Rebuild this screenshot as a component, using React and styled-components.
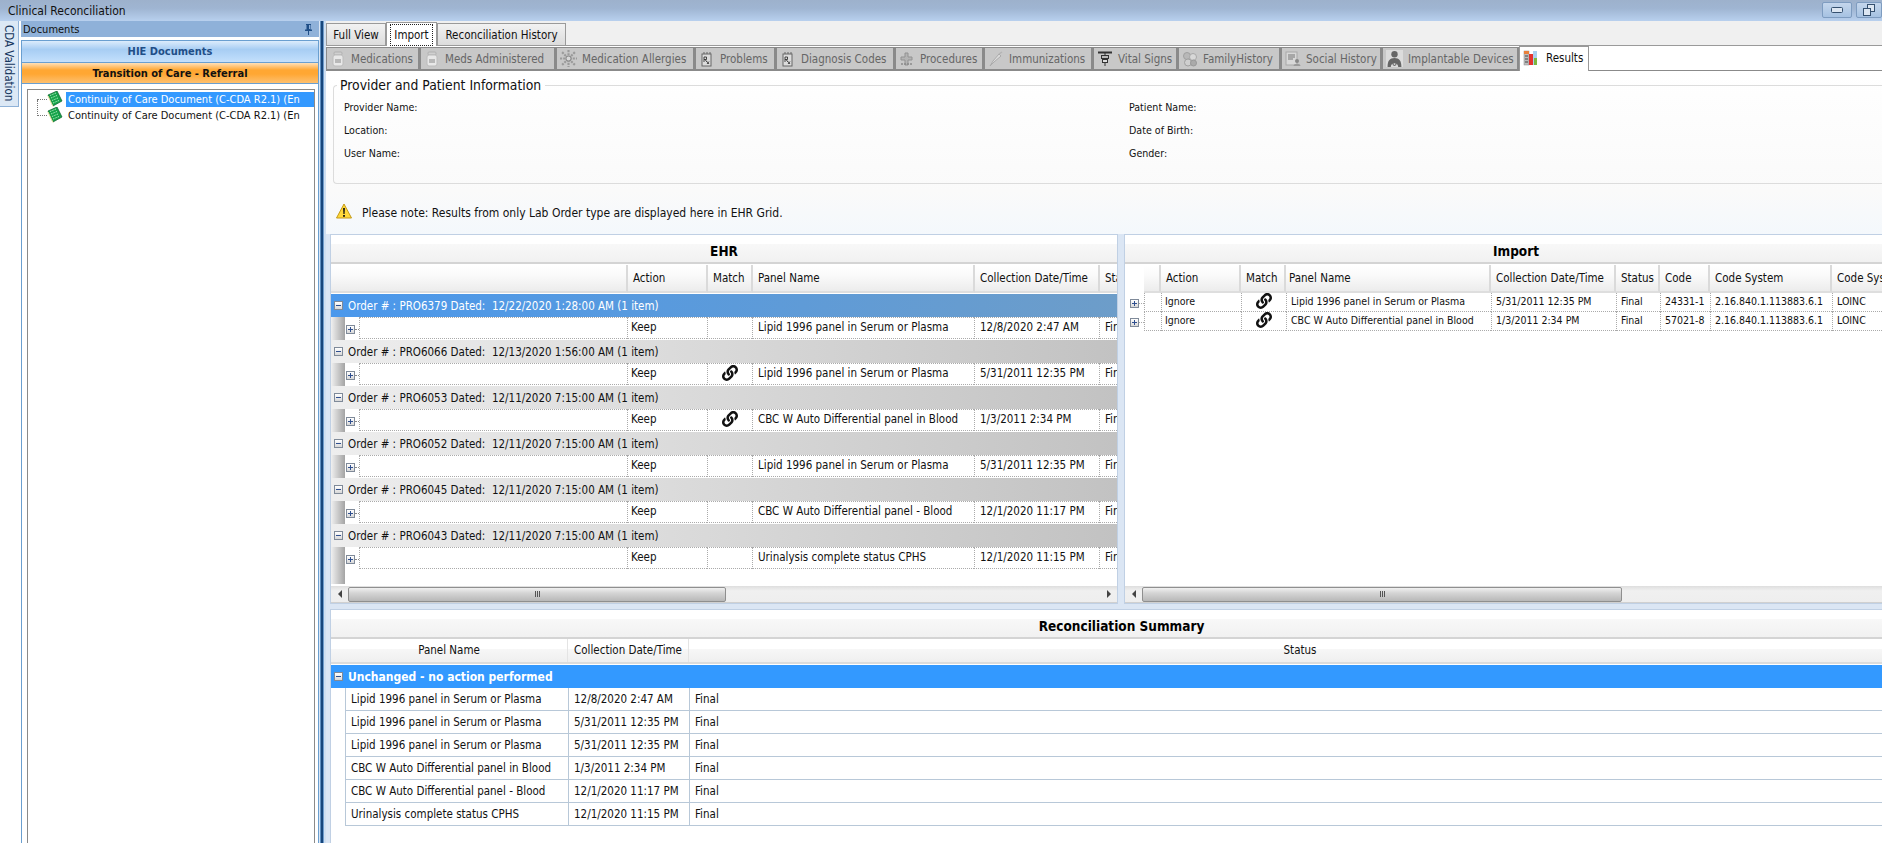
import React from 'react';
import styled, { createGlobalStyle } from 'styled-components';
import { FaLink } from 'react-icons/fa';

const Global = createGlobalStyle`
  html, body { margin: 0; padding: 0; width: 1882px; height: 843px; overflow: hidden; background: #fff; }
  body { font-family: "DejaVu Sans", "Noto Sans", sans-serif; font-stretch: condensed; font-size: 11.5px; color: #111; }
  * { box-sizing: border-box; }
`;

const Shell = styled.div`display: flex; flex-direction: column; width: 1882px; height: 843px; overflow: hidden;`;
const TitleBar = styled.header`
  height: 21px; flex: none; display: flex; align-items: center; padding-left: 8px;
  background: linear-gradient(#9db1cc, #9fb5d2 40%, #b8d0ee);
`;
const TitleText = styled.span`flex: 1; font-size: 12px;`;
const WinButton = styled.button`
  width: ${p => p.$w}px; height: 16px; margin: 0 0 2px ${p => p.$gap}px; padding: 0;
  display: flex; align-items: center; justify-content: center;
  border: 1px solid #7e9cc0; border-radius: 2px; background: linear-gradient(#c4d6ec, #a6c2e2);
`;
const Body = styled.div`flex: 1; display: flex; min-height: 0;`;

const Rail = styled.nav`width: 21px; flex: none;`;
const RailTab = styled.div`
  width: 19px; height: 86px; writing-mode: vertical-rl; display: flex; align-items: center; padding-top: 4px; padding-right: 1px;
  background: #dce8f5; border: 1px solid #8fb2d8; border-left: 0; border-top: 0; color: #17375e; font-size: 11.5px;
`;

const Docs = styled.aside`width: 298px; flex: none; display: flex; flex-direction: column;`;
const DocsHead = styled.div`
  height: 16px; flex: none; display: flex; justify-content: space-between; align-items: center;
  padding: 0 5px 0 2px; background: #8fb1d9; font-size: 11px;
`;
const DocsBody = styled.div`
  flex: 1; margin-top: 3px; min-height: 0; display: flex; flex-direction: column;
  border: 1px solid #6a9fd0; border-bottom: 0; background: #fff;
`;
const Band = styled.div`
  height: ${p => p.$h}px; flex: none; display: flex; align-items: center; justify-content: center;
  font-weight: 700; font-size: 11px; border-bottom: 1px solid #6a9fd0;
  ${p => p.$orange
    ? 'color:#111; background: linear-gradient(#ffe0b8, #ffa733 35%, #ffa733 55%, #fdc070);'
    : 'color:#1f4e87; background: linear-gradient(#dcecfc, #a7cdf3 40%, #b5d6f8 70%, #c4e0fb);'}
`;
const TreeBox = styled.div`
  flex: 1; margin: 5px 3px 0 5px; border: 1px solid #8a8a8a; border-bottom: 0; padding-top: 1px; position: relative;
`;
const TreeRow = styled.div`display: flex; align-items: center; height: 16px; padding-left: 9px;`;
const TreeElbow = styled.span`
  width: 10px; height: ${p => p.$tall ? 16 : 1}px; flex: none;
  border-bottom: 1px dotted #777; ${p => p.$tall ? 'border-left: 1px dotted #777; margin-top: -15px;' : ''}
`;
const TreeText = styled.span`
  flex: 1; height: 15px; line-height: 15px; margin-left: 3px; padding-left: 2px; white-space: nowrap; overflow: hidden; font-size: 11px;
  ${p => p.$sel ? 'background:#3399ff;color:#fff;' : ''}
`;

const Split = styled.div`
  width: 7px; flex: none; background: linear-gradient(90deg, #dbe6f4 0 1px, #5f8fc0 1px 2px, #17467c 2px 4px, #6f9ccb 4px 5px, #cfdff1 5px);
`;

const Main = styled.main`flex: 1; min-width: 0; display: flex; flex-direction: column; overflow: hidden;`;
const TopTabs = styled.div`
  height: 25px; flex: none; display: flex; align-items: flex-end; background: #f0f0f0; border-bottom: 1px solid #9a9a9a;
`;
const TopTab = styled.div`
  width: ${p => p.$w}px; height: ${p => p.$on ? 24 : 22}px; display: flex; align-items: center; justify-content: center;
  border: 1px solid #9a9a9a; border-bottom: 0; margin-bottom: ${p => p.$on ? -1 : 0}px;
  background: ${p => p.$on ? '#fff' : 'linear-gradient(#f2f2f2, #dcdcdc)'}; position: relative; z-index: ${p => p.$on ? 1 : 0};
`;
const Focus = styled.span`border: 1px dotted #222; padding: 1px 3px; line-height: 18px; height: 22px;`;
const SubTabs = styled.div`
  height: 25px; flex: none; display: flex; align-items: flex-end; background: #fff; border-bottom: 1px solid #8a8a8a;
`;
const SubTab = styled.div`
  width: ${p => p.$w}px; height: 24px; margin-bottom: -1px; display: flex; align-items: center; gap: 5px; padding-left: 3px;
  background: #c8c8c8; color: #666; white-space: nowrap;
  border: 1px solid #8a8a8a; border-right-width: 2px; border-bottom-width: 2px;
`;
const ActiveSub = styled.div`
  width: ${p => p.$w}px; height: 25px; margin-bottom: -1px; display: flex; align-items: center; gap: 7px; padding: 0 0 2px 3px;
  background: #fff; color: #111; border: 1px solid #999; border-bottom: 0; position: relative; z-index: 1;
`;

const Content = styled.div`
  flex: 1; min-height: 0; display: flex; flex-direction: column; width: 1586px;
  background: linear-gradient(#fff, #fafafa 120px, #f4f8fc 163px, #dbe6f4 163px);
`;
const Info = styled.fieldset`
  flex: none; margin: 6px 0 0 7px; height: 107px; padding: 1px 0 0 10px; min-width: 0;
  border: 1px solid #dcdcdc; border-right: 0; border-radius: 4px 0 0 4px;
`;
const InfoTitle = styled.legend`padding: 0 4px 0 3px; margin-left: -7px; font-size: 13.8px; line-height: 17px; height: 17px;`;
const InfoGrid = styled.div`display: grid; grid-template-columns: 785px 1fr; grid-auto-rows: 23px; align-items: center; font-size: 10.6px;`;
const Note = styled.div`height: 50px; flex: none; display: flex; align-items: flex-start; gap: 10px; padding: 19px 0 0 10px;`;
const NoteText = styled.span`line-height: 16px; margin-top: 2px; font-size: 12px;`;

const Grids = styled.div`display: flex; gap: 6px; height: 370px; flex: none; padding-left: 4px;`;
const Panel = styled.section`
  width: ${p => p.$w}px; flex: none; display: flex; flex-direction: column; background: #fff; overflow: hidden;
  border: 1px solid #c0d0e4;
`;
const PanelTitle = styled.div`
  margin-top: 9px; height: 20px; flex: none; display: flex; align-items: center; justify-content: center; padding-bottom: 5px;
  font-weight: 700; font-size: 13.5px; background: linear-gradient(#f8f8f8, #f1f1f1); border-bottom: 2px solid #d4d4d4; color: #000;
`;
const Head = styled.div`display: grid; grid-template-columns: ${p => p.$cols}; height: 28px; flex: none; margin-top: 1px;`;
const HeadCell = styled.div`
  display: flex; align-items: center; padding: 0 0 1px ${p => p.$pad ?? 5}px; white-space: nowrap; overflow: hidden;
  ${p => p.$center ? 'justify-content:center;padding-left:0;' : ''}
  ${p => p.$blank ? '' : 'background: linear-gradient(#fff, #fafafa 40%, #ececec); border-right: 2px solid #dadada; border-bottom: 2px solid #dedede;'}
`;
const Rows = styled.div`flex: 1; min-height: 0; display: flex; flex-direction: column; padding-top: ${p => p.$top}px;`;
const GroupRow = styled.div`
  height: 23px; flex: none; display: flex; align-items: center; gap: 5px; padding-left: 3px; white-space: pre;
  background: ${p => p.$sel ? 'linear-gradient(90deg, #4a98ec, #6d9dc9)' : 'linear-gradient(90deg, #eeeeee, #c2c2c2)'};
  color: ${p => p.$sel ? '#fff' : '#111'};
`;
const BlueRow = styled(GroupRow)`background: #3399ff; color: #fff; font-weight: 700; font-size: 12px;`;
const Toggle = styled.span`
  width: 9px; height: 9px; flex: none; position: relative; border: 1px solid #7f8a99; background: linear-gradient(#fff, #d8d8d8);
  &::before { content: ''; position: absolute; left: 1px; right: 1px; top: 3px; height: 1px; background: #2f4f8f; }
  &::after { content: ''; display: ${p => p.$plus ? 'block' : 'none'}; position: absolute; top: 1px; bottom: 1px; left: 3px; width: 1px; background: #2f4f8f; }
`;
const Data = styled.div`display: flex; height: 23px; flex: none;`;
const Indent = styled.div`
  width: 14px; flex: none; background: linear-gradient(90deg, #f0f0f0, #a4a4a4);
`;
const Expander = styled.div`
  width: 14px; flex: none; display: flex; align-items: center; padding: 2px 0 0 1px;
  &::after { content: ''; flex: 1; border-top: 1px dotted #888; }
`;
const Cells = styled.div`
  flex: 1; display: grid; grid-template-columns: ${p => p.$cols}; height: 22px;
`;
const Cell = styled.div`
  display: flex; align-items: center; white-space: nowrap; overflow: hidden; padding: 0 0 2px ${p => p.$pad ?? 5}px;
  border-left: 1px dotted #aaa; border-top: 1px dotted #aaa; border-bottom: 1px dotted #aaa;
  ${p => p.$center ? 'justify-content:center;padding-left:0;font-size:15px;color:#111;' : ''}
`;
const Filler = styled.div`flex: 1; min-height: 0; display: flex; padding-bottom: 2px;`;
const ImportRow = styled.div`display: flex; height: 19px; flex: none;`;
const ImportExp = styled.div`
  width: 19px; flex: none; display: flex; align-items: center; padding: 2px 0 0 5px;
  &::after { content: ''; flex: 1; border-top: 1px dotted #aaa; }
`;
const ImportCells = styled.div`flex: 1; display: grid; grid-template-columns: ${p => p.$cols};`;
const ImportCell = styled.div`
  display: flex; align-items: center; white-space: nowrap; overflow: hidden; padding: 0 0 3px ${p => p.$pad ?? 4}px;
  border-left: 1px dotted #aaa; border-bottom: 1px dotted #aaa; font-size: 10.5px;
  ${p => p.$center ? 'justify-content:center;padding-left:0;color:#111;' : ''}
`;
const Scroll = styled.div`
  height: 17px; flex: none; display: flex; align-items: center; background: linear-gradient(#dedede, #f0f0f0 30%, #eee);
  border-bottom: 1px solid #d0d0d0;
`;
const ArrowBox = styled.div`width: 17px; flex: none; display: flex; justify-content: center;`;
const Arrow = styled.span`
  width: 0; height: 0; border-top: 4px solid transparent; border-bottom: 4px solid transparent;
  ${p => p.$right ? 'border-left: 4px solid #444;' : 'border-right: 4px solid #444;'}
`;
const Thumb = styled.div`
  width: ${p => p.$w}px; height: 15px; flex: none; display: flex; align-items: center; justify-content: center; gap: 1px;
  border: 1px solid #8f8f8f; border-radius: 2px; background: linear-gradient(#f0f0f0, #d4d4d4 40%, #b8b8b8);
`;
const Grip = styled.i`width: 1px; height: 6px; background: #555;`;
const Track = styled.div`flex: 1;`;

const Summary = styled.section`
  margin: 5px 0 0 4px; flex: 1; min-height: 0; width: 1582px; display: flex; flex-direction: column; background: #fff;
  border: 1px solid #c0d0e4; border-bottom: 0; border-right: 0;
`;
const SumHead = styled.div`display: grid; grid-template-columns: 237px 121px 1fr; height: 25px; flex: none; border-bottom: 2px solid #dcdcdc;`;
const SumHeadCell = styled.div`
  display: flex; align-items: center; justify-content: center; padding-bottom: 1px;
  background: linear-gradient(#fff 0 10px, #f7f7f7 10px, #efefef); border-right: 1px solid #e4e4e4;
`;
const SumRows = styled.div`padding: 1px 0 0;`;
const SumRow = styled.div`
  display: grid; grid-template-columns: 223px 121px 1fr; height: 23px; margin-left: 14px;
  border-bottom: 1px solid #b8c8d8;
`;
const SumCell = styled.div`
  display: flex; align-items: center; padding: 0 0 1px 5px; border-left: 1px solid #b8c8d8;
`;

/* ---------- drawings ---------- */
const Svg = ({ children, s = 16 }) => <svg width={s} height={s} viewBox="0 0 16 16" style={{ flex: 'none' }}>{children}</svg>;

const Bottle = () => (
  <Svg>
    <rect x="4" y="1" width="8" height="3" rx="1" fill="#d0d0d0" stroke="#b0b0b0" />
    <rect x="3" y="4" width="10" height="11" rx="2" fill="#e8e8e8" stroke="#bcbcbc" />
    <rect x="5" y="8" width="6" height="4" fill="#b8b8b8" />
  </Svg>
);
const Snow = () => (
  <Svg s={17}>
    <g stroke="#9a9a9a" strokeWidth="2" strokeDasharray="2 1">
      <path d="M8 0v16M0 8h16M2 2l12 12M14 2L2 14" />
    </g>
    <circle cx="8" cy="8" r="2.4" fill="#d8d8d8" stroke="#8a8a8a" />
  </Svg>
);
const Rx = () => (
  <Svg>
    <rect x="3" y="3" width="9" height="12" fill="#dcdcdc" stroke="#666" />
    <path d="M5 1v2M8 1v2M11 1v2" stroke="#666" />
    <path d="M5 6v5M5 6h2.5v2.5H5M6 8.5l2 2.5M8 13l2-2.5M10 13l-2-2.5" stroke="#333" fill="none" strokeWidth=".9" />
  </Svg>
);
const Cross = () => (
  <Svg>
    <path d="M6 2h3v4h4v3H9v5H6V9H2V6h4z" fill="#b4b4b4" stroke="#929292" />
    <path d="M2 13h12" stroke="#8a8a8a" strokeWidth="1.5" strokeDasharray="2 1" />
  </Svg>
);
const Syringe = () => (
  <Svg>
    <path d="M2 15l3-5 6-7 2 2-7 6z" fill="#dcdcdc" stroke="#ababab" />
    <path d="M11 3l3-2" stroke="#b4b4b4" strokeWidth="1.5" />
  </Svg>
);
const Vital = () => (
  <Svg>
    <path d="M1 1.5h14" stroke="#333" strokeWidth="2" />
    <path d="M8 2v2M8 12v3" stroke="#333" />
    <rect x="4.5" y="4.5" width="7" height="3" fill="#bbb" stroke="#333" />
    <rect x="5.5" y="8.5" width="5" height="3" fill="#ddd" stroke="#333" />
  </Svg>
);
const Family = () => (
  <Svg>
    <circle cx="5" cy="5" r="3.5" fill="#b8b8b8" stroke="#a0a0a0" />
    <circle cx="11" cy="6" r="3.5" fill="#d8d8d8" stroke="#a8a8a8" />
    <circle cx="6" cy="11.5" r="3.5" fill="#cfcfcf" stroke="#a0a0a0" />
    <circle cx="11.5" cy="12" r="3" fill="#aaa" stroke="#999" />
  </Svg>
);
const Social = () => (
  <Svg>
    <rect x="1" y="1" width="11" height="13" fill="#d8d8d8" stroke="#a8a8a8" />
    <path d="M3 4h7M3 6h7M3 8h5" stroke="#777" />
    <circle cx="12" cy="10" r="2" fill="#888" />
    <path d="M8.5 15c0-3 7-3 7 0z" fill="#9a9a9a" />
  </Svg>
);
const Implant = () => (
  <Svg s={17}>
    <rect width="16" height="16" fill="#dcdcdc" />
    <circle cx="8" cy="4" r="3" fill="#666" />
    <path d="M1.5 16c0-6 2-8.5 6.5-8.5s6.5 2.5 6.5 8.5h-3c0-2-1.5-3.5-3.5-3.5S4.5 14 4.5 16z" fill="#666" />
    <circle cx="8" cy="13" r="1.5" fill="none" stroke="#666" />
  </Svg>
);
const ResultsIcon = () => (
  <Svg>
    <rect x="1" y="1" width="5" height="14" fill="#bdbdbd" stroke="#888" strokeWidth=".5" />
    <rect x="1" y="1" width="5" height="3" fill="#e8803c" />
    <path d="M2 6h3M2 9h3M2 12h3" stroke="#444" />
    <rect x="6" y="4" width="4" height="11" fill="#e5332e" />
    <rect x="10" y="1" width="4" height="14" fill="#a9d0ef" />
    <rect x="11" y="8" width="3" height="7" fill="#7cb83e" />
  </Svg>
);
const Warn = () => (
  <Svg>
    <path d="M8 1L15.5 15H.5z" fill="#ffd83a" stroke="#c49a18" strokeLinejoin="round" />
    <path d="M7.1 5h1.8l-.3 6H7.4z" fill="#111" />
    <rect x="7.1" y="12" width="1.8" height="1.8" fill="#111" />
  </Svg>
);
const Pin = () => (
  <svg width="11" height="12" viewBox="0 0 11 12">
    <path d="M3 1h5v1H7.5v4.5H9V8H6v4H5V8H2V6.5h1.5V2H3z" fill="#1f4e87" />
    <rect x="6" y="2" width="1" height="4" fill="#8fb1d9" />
  </svg>
);
const DocIcon = () => (
  <svg width="16" height="16" viewBox="0 0 16 16" style={{ flex: 'none' }}>
    <path d="M1 4L10 0l5 10-9 5z" fill="#16a34a" stroke="#0d5e2c" strokeWidth=".7" />
    <path d="M3 4.5l6-2.5M4 7l6-2.5M5 9.5l6-2.5M6 12l6-2.5" stroke="#b6f0c4" strokeWidth=".9" strokeDasharray="1.5 1" />
    <path d="M1 5l5 10.5" stroke="#e8e8a0" strokeWidth="1" />
  </svg>
);
const Link = () => <FaLink size={16} color="#111" />;

const ScrollBar = ({ w, end }) => (
  <Scroll>
    <ArrowBox><Arrow /></ArrowBox>
    <Thumb $w={w}><Grip /><Grip /><Grip /></Thumb>
    <Track />
    {end && <ArrowBox><Arrow $right /></ArrowBox>}
  </Scroll>
);

/* ---------- data ---------- */
const subTabs = [
  ['Medications', 94, Bottle], ['Meds Administered', 136, Bottle], ['Medication Allergies', 139, Snow],
  ['Problems', 81, Rx], ['Diagnosis Codes', 119, Rx], ['Procedures', 89, Cross], ['Immunizations', 109, Syringe],
  ['Vital Signs', 85, Vital], ['FamilyHistory', 103, Family], ['Social History', 101, Social], ['Implantable Devices', 137, Implant],
];
const ehr = [
  ['PRO6379', '12/22/2020 1:28:00 AM', 'Lipid 1996 panel in Serum or Plasma', '12/8/2020 2:47 AM', false],
  ['PRO6066', '12/13/2020 1:56:00 AM', 'Lipid 1996 panel in Serum or Plasma', '5/31/2011 12:35 PM', true],
  ['PRO6053', '12/11/2020 7:15:00 AM', 'CBC W Auto Differential panel in Blood', '1/3/2011 2:34 PM', true],
  ['PRO6052', '12/11/2020 7:15:00 AM', 'Lipid 1996 panel in Serum or Plasma', '5/31/2011 12:35 PM', false],
  ['PRO6045', '12/11/2020 7:15:00 AM', 'CBC W Auto Differential panel - Blood', '12/1/2020 11:17 PM', false],
  ['PRO6043', '12/11/2020 7:15:00 AM', 'Urinalysis complete status CPHS', '12/1/2020 11:15 PM', false],
];
const imports = [
  ['Lipid 1996 panel in Serum or Plasma', '5/31/2011 12:35 PM', '24331-1'],
  ['CBC W Auto Differential panel in Blood', '1/3/2011 2:34 PM', '57021-8'],
];
const summary = [
  ['Lipid 1996 panel in Serum or Plasma', '12/8/2020 2:47 AM'],
  ['Lipid 1996 panel in Serum or Plasma', '5/31/2011 12:35 PM'],
  ['Lipid 1996 panel in Serum or Plasma', '5/31/2011 12:35 PM'],
  ['CBC W Auto Differential panel in Blood', '1/3/2011 2:34 PM'],
  ['CBC W Auto Differential panel - Blood', '12/1/2020 11:17 PM'],
  ['Urinalysis complete status CPHS', '12/1/2020 11:15 PM'],
];
const ehrHead = '297px 80px 45px 222px 125px 60px';
const ehrCols = '268px 80px 45px 222px 125px 60px';
const impHead = '19px 17px 80px 45px 205px 125px 44px 50px 122px 100px';
const impCols = '17px 80px 45px 205px 125px 44px 50px 122px 100px';

export default function App() {
  return (
    <Shell>
      <Global />
      <TitleBar>
        <TitleText>Clinical Reconciliation</TitleText>
        <WinButton $w={30} $gap={0} aria-label="Minimize">
          <svg width="12" height="6"><rect x=".5" y=".5" width="11" height="5" rx="1" fill="#dce6f2" stroke="#35506f" /></svg>
        </WinButton>
        <WinButton $w={26} $gap={4} aria-label="Restore">
          <svg width="12" height="12" fill="#dce6f2" stroke="#35506f"><rect x="4.5" y=".5" width="7" height="7" /><rect x=".5" y="4.5" width="7" height="7" /></svg>
        </WinButton>
      </TitleBar>
      <Body>
        <Rail><RailTab>CDA Validation</RailTab></Rail>
        <Docs>
          <DocsHead>Documents<Pin /></DocsHead>
          <DocsBody>
            <Band $h={22}>HIE Documents</Band>
            <Band $h={21} $orange>Transition of Care - Referral</Band>
            <TreeBox>
              <TreeRow><TreeElbow /><DocIcon /><TreeText $sel>Continuity of Care Document (C-CDA R2.1) (En</TreeText></TreeRow>
              <TreeRow><TreeElbow $tall /><DocIcon /><TreeText>Continuity of Care Document (C-CDA R2.1) (En</TreeText></TreeRow>
            </TreeBox>
          </DocsBody>
        </Docs>
        <Split />
        <Main>
          <TopTabs>
            <TopTab $w={60}>Full View</TopTab>
            <TopTab $w={51} $on><Focus>Import</Focus></TopTab>
            <TopTab $w={129}>Reconciliation History</TopTab>
          </TopTabs>
          <SubTabs>
            {subTabs.map(([label, w, Icon]) => (
              <SubTab key={label} $w={w}><Icon />{label}</SubTab>
            ))}
            <ActiveSub $w={70}><ResultsIcon />Results</ActiveSub>
          </SubTabs>
          <Content>
            <Info>
              <InfoTitle>Provider and Patient Information</InfoTitle>
              <InfoGrid>
                <span>Provider Name:</span><span>Patient Name:</span>
                <span>Location:</span><span>Date of Birth:</span>
                <span>User Name:</span><span>Gender:</span>
              </InfoGrid>
            </Info>
            <Note><Warn /><NoteText>Please note: Results from only Lab Order type are displayed here in EHR Grid.</NoteText></Note>
            <Grids>
              <Panel $w={788}>
                <PanelTitle>EHR</PanelTitle>
                <Head $cols={ehrHead}>
                  <HeadCell />
                  <HeadCell>Action</HeadCell><HeadCell>Match</HeadCell><HeadCell>Panel Name</HeadCell>
                  <HeadCell>Collection Date/Time</HeadCell><HeadCell>Status</HeadCell>
                </Head>
                <Rows $top={1}>
                  {ehr.map(([id, when, name, date, linked], i) => (
                    <React.Fragment key={id}>
                      <GroupRow $sel={i === 0}><Toggle />{`Order # : ${id} Dated:  ${when} (1 item)`}</GroupRow>
                      <Data>
                        <Indent />
                        <Expander><Toggle $plus /></Expander>
                        <Cells $cols={ehrCols}>
                          <Cell /><Cell $pad={3}>Keep</Cell>
                          <Cell $center>{linked && <Link />}</Cell>
                          <Cell>{name}</Cell><Cell>{date}</Cell><Cell>Final</Cell>
                        </Cells>
                      </Data>
                    </React.Fragment>
                  ))}
                  <Filler><Indent /></Filler>
                </Rows>
                <ScrollBar w={378} end />
              </Panel>
              <Panel $w={784}>
                <PanelTitle>Import</PanelTitle>
                <Head $cols={impHead}>
                  <HeadCell $blank /><HeadCell />
                  <HeadCell>Action</HeadCell><HeadCell>Match</HeadCell><HeadCell $pad={3}>Panel Name</HeadCell>
                  <HeadCell>Collection Date/Time</HeadCell><HeadCell>Status</HeadCell><HeadCell>Code</HeadCell>
                  <HeadCell>Code System</HeadCell><HeadCell>Code System Name</HeadCell>
                </Head>
                <Rows $top={0}>
                  {imports.map(([name, date, code]) => (
                    <ImportRow key={code}>
                      <ImportExp><Toggle $plus /></ImportExp>
                      <ImportCells $cols={impCols}>
                        <ImportCell /><ImportCell $pad={3}>Ignore</ImportCell>
                        <ImportCell $center><Link /></ImportCell>
                        <ImportCell>{name}</ImportCell><ImportCell>{date}</ImportCell>
                        <ImportCell>Final</ImportCell><ImportCell>{code}</ImportCell>
                        <ImportCell>2.16.840.1.113883.6.1</ImportCell><ImportCell>LOINC</ImportCell>
                      </ImportCells>
                    </ImportRow>
                  ))}
                </Rows>
                <ScrollBar w={480} />
              </Panel>
            </Grids>
            <Summary>
              <PanelTitle>Reconciliation Summary</PanelTitle>
              <SumHead>
                <SumHeadCell>Panel Name</SumHeadCell>
                <SumHeadCell>Collection Date/Time</SumHeadCell>
                <SumHeadCell>Status</SumHeadCell>
              </SumHead>
              <SumRows>
                <BlueRow><Toggle />Unchanged - no action performed</BlueRow>
                {summary.map(([name, date], i) => (
                  <SumRow key={i}>
                    <SumCell>{name}</SumCell><SumCell>{date}</SumCell><SumCell>Final</SumCell>
                  </SumRow>
                ))}
              </SumRows>
            </Summary>
          </Content>
        </Main>
      </Body>
    </Shell>
  );
}
